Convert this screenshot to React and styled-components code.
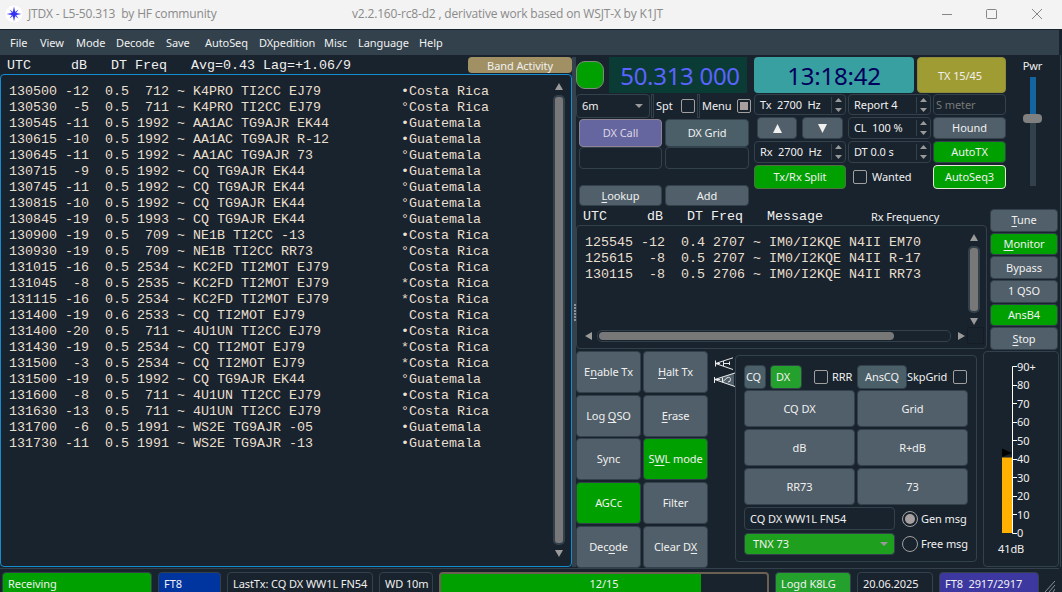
import React from "react";
import styled, { createGlobalStyle, css } from "styled-components";

const rows = [
    "130500 -12  0.5  712 ~ K4PRO TI2CC EJ79          •Costa Rica",
    "130530  -5  0.5  711 ~ K4PRO TI2CC EJ79          °Costa Rica",
    "130545 -11  0.5 1992 ~ AA1AC TG9AJR EK44         •Guatemala",
    "130615 -10  0.5 1992 ~ AA1AC TG9AJR R-12         •Guatemala",
    "130645 -11  0.5 1992 ~ AA1AC TG9AJR 73           °Guatemala",
    "130715  -9  0.5 1992 ~ CQ TG9AJR EK44            •Guatemala",
    "130745 -11  0.5 1992 ~ CQ TG9AJR EK44            °Guatemala",
    "130815 -10  0.5 1992 ~ CQ TG9AJR EK44            °Guatemala",
    "130845 -19  0.5 1993 ~ CQ TG9AJR EK44            °Guatemala",
    "130900 -19  0.5  709 ~ NE1B TI2CC -13            •Costa Rica",
    "130930 -19  0.5  709 ~ NE1B TI2CC RR73           °Costa Rica",
    "131015 -16  0.5 2534 ~ KC2FD TI2MOT EJ79          Costa Rica",
    "131045  -8  0.5 2535 ~ KC2FD TI2MOT EJ79         *Costa Rica",
    "131115 -16  0.5 2534 ~ KC2FD TI2MOT EJ79         *Costa Rica",
    "131400 -19  0.6 2533 ~ CQ TI2MOT EJ79             Costa Rica",
    "131400 -20  0.5  711 ~ 4U1UN TI2CC EJ79          •Costa Rica",
    "131430 -19  0.5 2534 ~ CQ TI2MOT EJ79            *Costa Rica",
    "131500  -3  0.5 2534 ~ CQ TI2MOT EJ79            *Costa Rica",
    "131500 -19  0.5 1992 ~ CQ TG9AJR EK44            °Guatemala",
    "131600  -8  0.5  711 ~ 4U1UN TI2CC EJ79          •Costa Rica",
    "131630 -13  0.5  711 ~ 4U1UN TI2CC EJ79          °Costa Rica",
    "131700  -6  0.5 1991 ~ WS2E TG9AJR -05           •Guatemala",
    "131730 -11  0.5 1991 ~ WS2E TG9AJR -13           •Guatemala",
];

const rxRows = [
    "125545 -12  0.4 2707 ~ IM0/I2KQE N4II EM70",
    "125615  -8  0.5 2707 ~ IM0/I2KQE N4II R-17",
    "130115  -8  0.5 2706 ~ IM0/I2KQE N4II RR73",
];

const menu = ["File", "View", "Mode", "Decode", "Save", "AutoSeq", "DXpedition", "Misc", "Language", "Help"];

const sideButtons = [
    { label: "Tune", key: 0 },
    { label: "Monitor", key: 0, on: true },
    { label: "Bypass" },
    { label: "1 QSO" },
    { label: "AnsB4", on: true },
    { label: "Stop", key: 0 },
];

const padButtons = [
    { label: "Enable Tx", key: 1 },
    { label: "Halt Tx", key: 0 },
    { label: "Log QSO", key: 4 },
    { label: "Erase", key: 0 },
    { label: "Sync" },
    { label: "SWL mode", key: 1, on: true },
    { label: "AGCc", on: true },
    { label: "Filter" },
    { label: "Decode", key: 3 },
    { label: "Clear DX", key: 7 },
];

const messages = ["CQ DX", "Grid", "dB", "R+dB", "RR73", "73"];
const ticks = ["90+", "80", "70", "60", "50", "40", "30", "20", "10", "0"];

// label with its keyboard accelerator underlined
const Accel = ({ label, at }) =>
    at === undefined ? (
        <span>{label}</span>
    ) : (
        <span>
            {label.slice(0, at)}
            <u>{label[at]}</u>
            {label.slice(at + 1)}
        </span>
    );

const Arrow = ({ dir = "up", w = 8, h = 7 }) => {
    const d = {
        up: "M0 10 L5 0 L10 10Z",
        down: "M0 0 L5 10 L10 0Z",
        left: "M10 0 L0 5 L10 10Z",
        right: "M0 0 L10 5 L0 10Z",
    }[dir];
    return (
        <svg width={w} height={h} viewBox="0 0 10 10" preserveAspectRatio="none">
            <path d={d} fill="currentColor" />
        </svg>
    );
};

const Spin = ({ children }) => (
    <SpinBox>
        <span>{children}</span>
        <SpinArrows>
            <Arrow w={7} h={4} />
            <Arrow dir="down" w={7} h={4} />
        </SpinArrows>
    </SpinBox>
);

const TitleBar = () => (
    <Title>
        <svg width="18" height="18" viewBox="0 0 18 18">
            <circle cx="9" cy="9" r="8.5" fill="#fff" />
            <path d="M4.5 4.5 L9 7.4 L13.5 4.5 L10.6 9 L13.5 13.5 L9 10.6 L4.5 13.5 L7.4 9Z" fill="#5a5af4" />
            <path d="M9 1.6 L10.3 7.7 L16.4 9 L10.3 10.3 L9 16.4 L7.7 10.3 L1.6 9 L7.7 7.7Z" fill="#3232f0" />
        </svg>
        <AppName>JTDX - L5-50.313&nbsp; by HF community</AppName>
        <Version>v2.2.160-rc8-d2 , derivative work based on WSJT-X by K1JT</Version>
        <svg width="102" height="12" viewBox="0 0 102 12" fill="none" stroke="#868686">
            <path d="M1 6.5 H11 M46.5 1.5 H54.5 Q55.5 1.5 55.5 2.5 V10.5 H46.5 Q45.5 10.5 45.5 9.5 V2.5 Q45.5 1.5 46.5 1.5Z M91 1 L101 11 M101 1 L91 11" />
        </svg>
    </Title>
);

const BandActivity = () => (
    <Left>
        <LeftHead>
            <Mono>UTC     dB   DT Freq   Avg=0.43 Lag=+1.06/9</Mono>
            <Badge>Band Activity</Badge>
        </LeftHead>
        <ActivityBox>
            <Decodes>
                {rows.map((r, i) => (
                    <Line key={i}>{r}</Line>
                ))}
            </Decodes>
            <VScroll>
                <Arrow />
                <VTrack />
                <Arrow dir="down" />
            </VScroll>
        </ActivityBox>
    </Left>
);

const Controls = () => (
    <Deck>
        <DeckMain>
            <Readouts>
                <Lamp />
                <Frequency>50.313 000</Frequency>
                <Clock>13:18:42</Clock>
                <TxSlot>TX 15/45</TxSlot>
            </Readouts>
            <Columns>
                <ColDx>
                    <BandRow>
                        <BandSelect>
                            6m
                            <Arrow dir="down" w={8} h={4} />
                        </BandSelect>
                        <Handle />
                        <Tag $w={25}>Spt</Tag>
                        <Check />
                        <Handle $after />
                        <Tag $w={35}>Menu</Tag>
                        <Check $filled />
                    </BandRow>
                    <DxGrid>
                        <Button $h={28} $bg="#6565a0" $edge="#8f8295" $ink="#dcd6e4">DX Call</Button>
                        <Button $h={28} $bg="#4b5f68">DX Grid</Button>
                        <Field $h={22} />
                        <Field $h={22} />
                    </DxGrid>
                    <DxGrid>
                        <Button $h={21}><Accel label="Lookup" at={0} /></Button>
                        <Button $h={21}>Add</Button>
                    </DxGrid>
                </ColDx>
                <Stack $w={92}>
                    <Spin>Tx&nbsp; 2700&nbsp; Hz</Spin>
                    <ArrowPair>
                        <Button><Arrow w={9} h={9} /></Button>
                        <Button><Arrow dir="down" w={9} h={9} /></Button>
                    </ArrowPair>
                    <Spin>Rx&nbsp; 2700&nbsp; Hz</Spin>
                    <Button $on $edge="#4f7040">Tx/Rx Split</Button>
                </Stack>
                <Stack $w={83}>
                    <Spin>Report 4</Spin>
                    <Spin>CL&nbsp; 100 %</Spin>
                    <Spin>DT 0.0 s</Spin>
                    <Wanted><Check />Wanted</Wanted>
                </Stack>
                <Stack $w={73}>
                    <Field $dim>S meter</Field>
                    <Button>Hound</Button>
                    <Button $on>AutoTX</Button>
                    <Button $on $edge="#e8e8d8">AutoSeq3</Button>
                </Stack>
            </Columns>
        </DeckMain>
        <Power>
            Pwr
            <Groove><Level /><Knob /><Rest /></Groove>
        </Power>
    </Deck>
);

const RxFrequency = () => (
    <Middle>
        <RxSide>
            <RxHead>
                <Mono>UTC     dB   DT Freq   Message</Mono>
                <RxLabel>Rx Frequency</RxLabel>
            </RxHead>
            <RxBox>
                <RxTop>
                    <Decodes>
                        {rxRows.map((r) => (
                            <Line key={r}>{r}</Line>
                        ))}
                    </Decodes>
                    <VScroll>
                        <Arrow />
                        <VTrack />
                        <Arrow dir="down" />
                    </VScroll>
                </RxTop>
                <HScroll>
                    <Arrow dir="left" w={7} h={8} />
                    <HTrack><HThumb /></HTrack>
                    <Arrow dir="right" w={7} h={8} />
                    <Corner />
                </HScroll>
            </RxBox>
        </RxSide>
        <Side>
            {sideButtons.map((b) => (
                <Button key={b.label} $on={b.on}><Accel label={b.label} at={b.key} /></Button>
            ))}
        </Side>
    </Middle>
);

const Antennas = () => (
    <svg width="24" height="34" viewBox="0 0 24 34" fill="none" stroke="#e8e8e8">
        <path d="M4 22.5 L23 16 V29.5Z" fill="#505f69" stroke="none" />
        <path d="M4.5 3.5 V9.5 M4.5 6.5 L22 .8 M4.5 6.5 L22 12.5 M4.5 6.5 H9 M12.5 4 V9 M12.5 6.5 H18.5 M18.5 4.5 V8" />
        <path d="M3.5 20 V26 M3.5 22.5 L24 16 M3.5 22.5 L24 29.5 M3.5 22.5 H9 M11.5 20.5 V25 L16 20.8 Q19.5 19.5 19.5 22.5 Q19.5 25 17 25" />
    </svg>
);

const Messages = () => (
    <Group>
        <Options>
            <CqButton $h={24} $w={22} $bg="#4b5f68">CQ</CqButton>
            <DxButton $h={24} $w={32} $bg="#24a02c">DX</DxButton>
            <Check />
            <Tag $w={25}>RRR</Tag>
            <Button $h={24} $w={50} $bg="#4b5f68">AnsCQ</Button>
            <Tag $w={46}>SkpGrid</Tag>
            <Check />
        </Options>
        <MessageGrid>
            {messages.map((m) => (
                <Button key={m} $h={37}>{m}</Button>
            ))}
        </MessageGrid>
        <SendRow>
            <Field $h={23} $w={151}>CQ DX WW1L FN54</Field>
            <Radio $on /><span>Gen msg</span>
        </SendRow>
        <SendRow>
            <FreeText>TNX 73<Arrow dir="down" w={8} h={4} /></FreeText>
            <Radio /><span>Free msg</span>
        </SendRow>
    </Group>
);

const Meter = () => (
    <MeterBox>
        <MeterBody>
            <svg width="18" height="169" viewBox="0 0 18 169">
                <path d="M0 82.5 L10 87 L0 91Z" fill="#000" />
                <rect x="0" y="91.5" width="10" height="75.5" fill="#ffb000" />
                <path
                    d={"M10.5 .5 V167.5" + ticks.map((_, i) => ` M10.5 ${Math.round(i * 18.5) + 0.5} H15`).join("")}
                    fill="none"
                    stroke="#fff"
                />
            </svg>
            <Scale>
                {ticks.map((t) => (
                    <span key={t}>{t}</span>
                ))}
            </Scale>
        </MeterBody>
        <MeterValue>41dB</MeterValue>
    </MeterBox>
);

const Status = () => (
    <StatusBar>
        <Cell $w={150} $bg="#00a000">Receiving</Cell>
        <Cell $w={63} $bg="#0035a0">FT8</Cell>
        <Cell $w={146}>LastTx: CQ DX WW1L FN54</Cell>
        <Cell $w={54}>WD 10m</Cell>
        <Progress>12/15</Progress>
        <Cell $w={76} $bg="#24a02c">Logd K8LG</Cell>
        <Cell $w={76}>20.06.2025</Cell>
        <Cell $w={100} $bg="#3c38a0">FT8&nbsp; 2917/2917</Cell>
        <svg width="10" height="12" viewBox="0 0 10 12" stroke="#8a939a">
            <path d="M0 12 L10 1 M4 12 L10 5 M8 12 L10 9" />
        </svg>
    </StatusBar>
);

const App = () => (
    <>
        <GlobalStyle />
        <Window>
            <TitleBar />
            <MenuBar>
                {menu.map((m) => (
                    <span key={m}>{m}</span>
                ))}
            </MenuBar>
            <Body>
                <BandActivity />
                <Splitter>
                    {[0, 1, 2, 3, 4, 5].map((i) => (
                        <i key={i} />
                    ))}
                </Splitter>
                <Right>
                    <Controls />
                    <RxFrequency />
                    <Bottom>
                        <Pad>
                            {padButtons.map((b) => (
                                <Button key={b.label} $on={b.on}><Accel label={b.label} at={b.key} /></Button>
                            ))}
                        </Pad>
                        <AntennaSlot><Antennas /></AntennaSlot>
                        <Messages />
                        <Meter />
                    </Bottom>
                </Right>
            </Body>
            <Status />
        </Window>
    </>
);

const GlobalStyle = createGlobalStyle`
  * {
    box-sizing: border-box;
  }
  body {
    margin: 0;
    background: #19232d;
    overflow: hidden;
  }
  svg {
    display: block;
    flex: none;
  }
  u {
    text-underline-offset: 2px;
    text-decoration-skip-ink: none;
  }
`;

const center = css`
  display: flex;
  align-items: center;
  justify-content: center;
`;

const Window = styled.div`
  width: 1062px;
  height: 592px;
  display: flex;
  flex-direction: column;
  overflow: hidden;
  background: #19232d;
  color: #f0f0f0;
  font: 11px/14px "Noto Sans", sans-serif;
  letter-spacing: -0.08px;
  white-space: nowrap;
`;

const Title = styled.div`
  height: 29px;
  flex: none;
  display: flex;
  align-items: center;
  padding: 0 19px 2px 5px;
  background: #f3f3f3;
  color: #8a8a8a;
  font: 12px/16px "Open Sans", sans-serif;
  letter-spacing: -0.17px;
`;

const AppName = styled.span`
  width: 324px;
  margin-left: 5px;
`;

const Version = styled.span`
  flex: 1;
`;

const MenuBar = styled.div`
  height: 26px;
  flex: none;
  display: grid;
  grid-template-columns: 30px 36px 40px 50px 39px 54px 65px 34px 61px 1fr;
  align-items: center;
  padding-left: 10px;
  margin-right: 3px;
  border-top: 1px solid #19232d;
  background: #32414b;
`;

const Body = styled.div`
  height: 512px;
  flex: none;
  display: flex;
`;

const Left = styled.div`
  width: 572px;
  flex: none;
`;

const LeftHead = styled.div`
  height: 19px;
  display: flex;
  justify-content: space-between;
  padding: 2px 0 0 7px;
`;

const Mono = styled.span`
  font: 13.33px/18px "Liberation Mono", monospace;
  letter-spacing: 0;
  white-space: pre;
`;

const Badge = styled.div`
  ${center}
  width: 104px;
  height: 16px;
  padding-top: 1px;
  border-radius: 4px;
  background: #a09064;
`;

const ActivityBox = styled.div`
  height: 493px;
  display: flex;
  justify-content: space-between;
  padding: 8px 6px 9px 8px;
  border: 1px solid #148cd2;
  border-radius: 4px;
`;

const Decodes = styled.div`
  color: #e9dfcf;
`;

const Line = styled.div`
  height: 16px;
  font: 13.33px/18px "Liberation Mono", monospace;
  letter-spacing: 0;
  white-space: pre;
`;

const VScroll = styled.div`
  width: 12px;
  display: flex;
  flex-direction: column;
  align-items: center;
  justify-content: space-between;
  color: #9a9a9a;
`;

const VTrack = styled.div`
  width: 12px;
  flex: 1;
  margin: 5px 0;
  border: 2px solid #32414b;
  border-radius: 5px;
  background: #787878;
`;

const Splitter = styled.div`
  ${center}
  flex-direction: column;
  gap: 1px;
  width: 4px;
  margin-top: 2px;
  padding-left: 2px;
  background: #32414b;

  i {
    width: 2px;
    height: 2px;
    background: #8a939a;
  }
`;

const Right = styled.div`
  width: 485px;
  flex: none;
  border-right: 1px solid #32414b;
`;

const Deck = styled.div`
  height: 152px;
  display: flex;
  padding-top: 2px;
`;

const DeckMain = styled.div`
  width: 430px;
  flex: none;
`;

const Readouts = styled.div`
  height: 36px;
  display: flex;
  align-items: center;
`;

const Lamp = styled.div`
  width: 28px;
  height: 28px;
  margin-right: 5px;
  border: 1px solid #7d8a7d;
  border-radius: 9px;
  background: #00a000;
`;

const Frequency = styled.div`
  ${center}
  width: 138px;
  height: 36px;
  padding: 2px 0 0 4px;
  background: #0a3b34;
  color: #5a64ff;
  font-size: 24px;
  letter-spacing: -0.3px;
`;

const Clock = styled.div`
  ${center}
  width: 160px;
  height: 36px;
  padding-top: 2px;
  margin: 0 3px 0 7px;
  border-radius: 4px;
  background: #38a0a0;
  color: #00005c;
  font-size: 24px;
  letter-spacing: -0.2px;
`;

const TxSlot = styled.div`
  ${center}
  width: 89px;
  height: 36px;
  padding: 2px 3px 0 0;
  border: 1px solid #8f8c3c;
  border-radius: 4px;
  background: #a09c34;
`;

const Columns = styled.div`
  display: flex;
  gap: 3px;
`;

const ColDx = styled.div`
  width: 175px;
  flex: none;
  display: flex;
  flex-direction: column;
`;

const BandRow = styled.div`
  height: 25px;
  display: flex;
  align-items: center;
  padding-top: 1px;
`;

const BandSelect = styled.div`
  width: 74px;
  height: 24px;
  flex: none;
  display: flex;
  align-items: center;
  justify-content: space-between;
  padding: 0 6px 0 5px;
  border: 1px solid #32414b;
  border-radius: 4px;

  svg {
    color: #9a9a9a;
  }
`;

const Handle = styled.div`
  width: 3px;
  height: 24px;
  flex: none;
  margin: ${(p) => (p.$after ? "0 2px" : "0 2px 0 1px")};
  border: 1px solid #32414b;
`;

const Tag = styled.span`
  width: ${(p) => p.$w}px;
  flex: none;
`;

const Check = styled.div`
  ${center}
  width: 14px;
  height: 14px;
  flex: none;
  border: 1px solid #a0a0a0;
  border-radius: 2px;

  &::after {
    content: "";
    width: 8px;
    height: 8px;
    background: ${(p) => (p.$filled ? "#a8a0a0" : "transparent")};
  }
`;

const Button = styled.div`
  ${center}
  width: ${(p) => (p.$w ? `${p.$w}px` : "auto")};
  height: ${(p) => (p.$h ? `${p.$h}px` : "auto")};
  flex: none;
  border: 1px solid ${(p) => p.$edge || "#32414b"};
  border-radius: 4px;
  background: ${(p) => p.$bg || (p.$on ? "#00a000" : "#505f69")};
  color: ${(p) => p.$ink || "#f0f0f0"};
`;

const CqButton = styled(Button)`
  padding-right: 3px;
`;

const DxButton = styled(Button)`
  justify-content: flex-start;
  padding-left: 5px;
`;

const Field = styled.div`
  display: flex;
  align-items: center;
  width: ${(p) => (p.$w ? `${p.$w}px` : "auto")};
  height: ${(p) => (p.$h ? `${p.$h}px` : "auto")};
  flex: none;
  padding-left: ${(p) => (p.$dim ? 2 : 5)}px;
  border: 1px solid #32414b;
  border-radius: 4px;
  color: ${(p) => (p.$dim ? "#787878" : "#f0f0f0")};
`;

const DxGrid = styled.div`
  display: grid;
  grid-template-columns: 83px 84px;
  column-gap: 3px;
  padding: 1px 0 16px 3px;

  & + & {
    padding-top: 0;
  }
`;

const Stack = styled.div`
  width: ${(p) => p.$w}px;
  flex: none;
  display: grid;
  grid-template-rows: 21px 22px 22px 24px;
  align-content: start;
  gap: 2px;
  padding-top: 1px;

  & + & {
    margin-left: -1px;
  }
`;

const SpinBox = styled.div`
  display: flex;
  align-items: center;
  justify-content: space-between;
  padding-left: 5px;
  border: 1px solid #32414b;
  border-radius: 4px;
`;

const SpinArrows = styled.div`
  height: 16px;
  display: flex;
  flex-direction: column;
  justify-content: space-between;
  padding: 1px 3px;
  border-left: 1px solid #32414b;
  color: #9a9a9a;
`;

const ArrowPair = styled.div`
  display: grid;
  grid-template-columns: 40px 41px;
  gap: 5px;
  padding-left: 3px;
`;

const Wanted = styled.div`
  display: flex;
  align-items: center;
  gap: 5px;
  padding-left: 5px;
`;

const Power = styled.div`
  flex: 1;
  display: flex;
  flex-direction: column;
  align-items: center;
  padding: 2px 1px 0 0;
`;

const Groove = styled.div`
  width: 20px;
  display: flex;
  flex-direction: column;
  align-items: center;
  margin-top: 4px;
`;

const Level = styled.div`
  width: 6px;
  height: 37px;
  background: #1464a0;
`;

const Knob = styled.div`
  width: 19px;
  height: 9px;
  border-radius: 4px;
  background: #808080;
`;

const Rest = styled.div`
  width: 6px;
  height: 63px;
  background: #32414b;
`;

const Middle = styled.div`
  height: 142px;
  display: flex;
`;

const RxSide = styled.div`
  width: 411px;
  flex: none;
`;

const RxHead = styled.div`
  height: 14px;
  display: flex;
  margin: 1px 0 3px;
  padding-left: 7px;
`;

const RxLabel = styled.span`
  margin-left: 48px;
  padding-top: 2px;
`;

const RxBox = styled.div`
  height: 124px;
  border: 1px solid #32414b;
  border-radius: 4px;
  padding: 8px 3px 0 8px;
`;

const RxTop = styled.div`
  height: 91px;
  display: flex;
  justify-content: space-between;
  padding-right: 3px;
`;

const HScroll = styled.div`
  height: 21px;
  display: flex;
  align-items: center;
  color: #9a9a9a;
`;

const HTrack = styled.div`
  width: 354px;
  height: 12px;
  flex: none;
  margin: 0 7px 0 5px;
  padding: 1px;
  border: 1px solid #32414b;
  border-radius: 5px;
`;

const HThumb = styled.div`
  width: 295px;
  height: 8px;
  border-radius: 4px;
  background: #787878;
`;

const Corner = styled.div`
  width: 17px;
  height: 17px;
  flex: none;
  margin-left: 2px;
  border: 1px solid #141d26;
`;

const Side = styled.div`
  display: grid;
  width: 68px;
  grid-template-rows: repeat(6, 22.7px);
  row-gap: 1px;
  margin: 2px 0 0 3px;
`;

const Bottom = styled.div`
  display: flex;
  padding-top: 2px;
`;

const Pad = styled.div`
  display: grid;
  grid-template-columns: 65px 65px;
  grid-template-rows: repeat(5, 42px);
  gap: 1.7px 2px;
`;

const AntennaSlot = styled.div`
  width: 27px;
  flex: none;
  padding: 6px 0 0 3px;
`;

const Group = styled.div`
  width: 242px;
  height: 207px;
  flex: none;
  margin-top: 4px;
  padding: 8px;
  border: 1px solid #32414b;
  border-radius: 4px;
`;

const Options = styled.div`
  height: 25px;
  display: flex;
  align-items: center;

  ${DxButton} {
    margin: 0 12px 0 4px;
  }
  ${Tag}:nth-child(4) {
    margin-left: 4px;
  }
`;

const MessageGrid = styled.div`
  display: grid;
  grid-template-columns: 111px 111px;
  gap: 2px;
  margin: 1px 0;
`;

const SendRow = styled.div`
  height: 25px;
  display: flex;
  align-items: center;

  span {
    margin-left: 3px;
  }
`;

const Radio = styled.div`
  ${center}
  width: 16px;
  height: 16px;
  flex: none;
  margin-left: 7px;
  border: 1px solid #a0a0a0;
  border-radius: 50%;

  &::after {
    content: "";
    width: 10px;
    height: 10px;
    border-radius: 50%;
    background: ${(p) => (p.$on ? "#a8a0a0" : "transparent")};
  }
`;

const FreeText = styled.div`
  width: 151px;
  height: 22px;
  flex: none;
  display: flex;
  align-items: center;
  justify-content: space-between;
  padding: 0 6px 0 8px;
  border: 1px solid #32414b;
  border-radius: 4px;
  background: #1ea01e;

  svg {
    color: #9a9a9a;
  }
`;

const MeterBox = styled.div`
  width: 76px;
  height: 216px;
  flex: none;
  margin-left: 6px;
  padding: 8px 0 0 18px;
  border: 1px solid #32414b;
  border-radius: 4px;
`;

const MeterBody = styled.div`
  display: flex;
  height: 181px;

  svg {
    margin-top: 6px;
  }
`;

const Scale = styled.div`
  display: flex;
  flex-direction: column;
  justify-content: space-between;
  margin-left: -3px;
  height: 180px;
`;

const MeterValue = styled.div`
  margin: 1px 0 0 -4px;
`;

const StatusBar = styled.div`
  height: 25px;
  flex: none;
  display: flex;
  gap: 6px;
  margin: 1px 3px 0 0;
  padding: 3px 0 0 2px;
  border-top: 1px solid #32414b;

  > svg {
    margin-top: 8px;
  }
`;

const Cell = styled.div`
  width: ${(p) => p.$w}px;
  height: 24px;
  flex: none;
  display: flex;
  align-items: center;
  padding-left: 5px;
  border: 1px solid #32414b;
  border-radius: 4px;
  background: ${(p) => p.$bg || "transparent"};
`;

const Progress = styled.div`
  ${center}
  width: 330px;
  height: 24px;
  flex: none;
  border: 2px solid #6b6052;
  border-radius: 4px;
  background: linear-gradient(to right, #00a000 260px, transparent 260px);
`;

export default App;
